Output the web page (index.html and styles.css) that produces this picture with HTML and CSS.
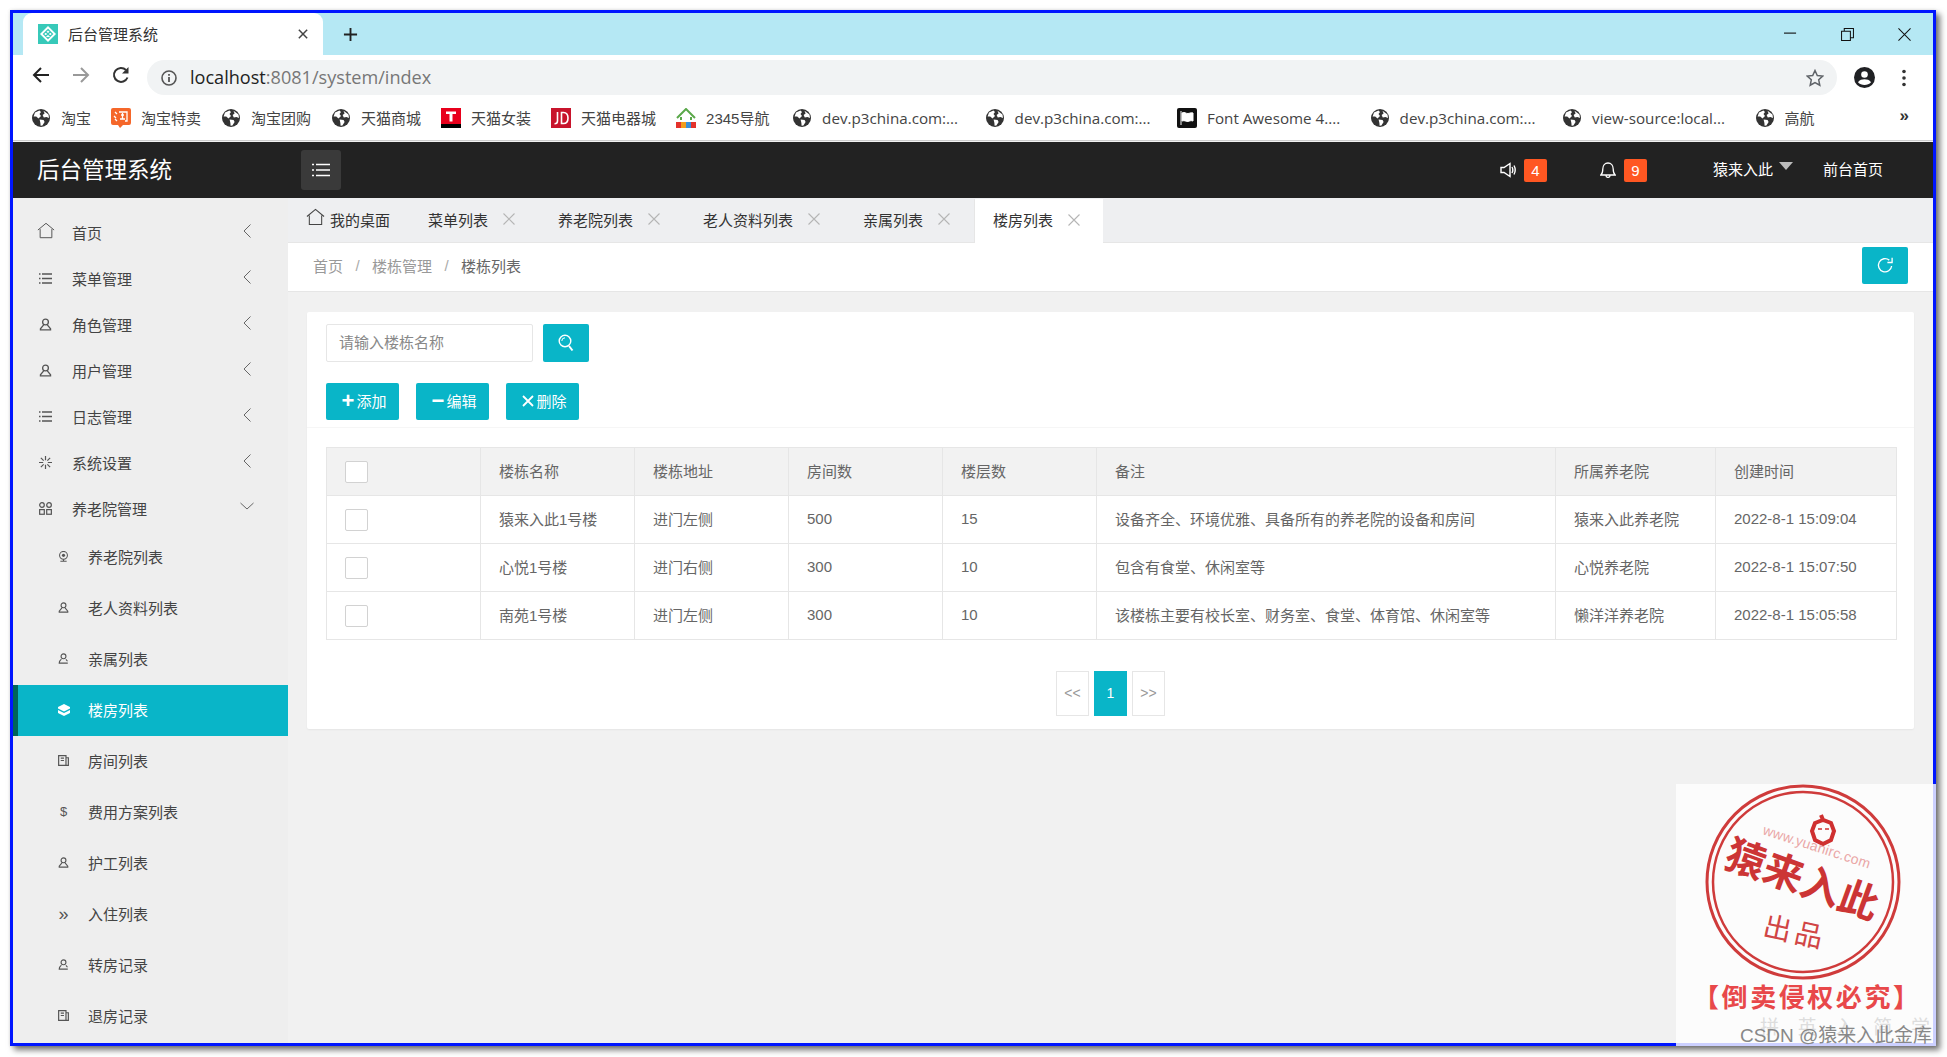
FILE: index.html
```html
<!DOCTYPE html>
<html lang="zh">
<head>
<meta charset="utf-8">
<title>后台管理系统</title>
<link rel="stylesheet" href="styles.css">
</head>
<body>
<svg class="defs" width="0" height="0" aria-hidden="true">
  <symbol id="i-globe" viewBox="0 0 18 18"><circle cx="9" cy="9" r="9" fill="#333"/><path d="M3 3.500 7.500 1.400 9 3 7.500 5 9 7 6.500 9.500 4.200 7.600 1.600 7.400ZM11.500 1.800 16.500 5.600 17 9 14.400 8 11.800 8.400 10.600 6 12.600 4.400ZM7.600 10.600 11.600 11 12.600 13 10.400 16.600 8.600 16.800 8.400 14Z" fill="#fff"/></symbol>
  <symbol id="i-menu" viewBox="0 0 18 14"><path d="M0 1.500h2M4 1.500h14M0 7h2M4 7h14M0 12.500h2M4 12.500h14" fill="none" stroke="currentColor" stroke-width="1.400"/></symbol>
  <symbol id="i-menu-s" viewBox="0 0 13 13"><path d="M0 2h1.500M3 2h10M0 6.500h1.500M3 6.500h10M0 11h1.500M3 11h10" fill="none" stroke="currentColor" stroke-width="1.400"/></symbol>
  <symbol id="i-user" viewBox="0 0 18 18"><circle cx="9" cy="5.500" r="4" fill="none" stroke="currentColor" stroke-width="1.800"/><path d="M6.500 9.500 2 15v1.500h14V15l-4.500-5.500" fill="none" stroke="currentColor" stroke-width="1.800"/></symbol>
  <symbol id="i-user2" viewBox="0 0 18 18"><circle cx="9" cy="5.500" r="4" fill="none" stroke="currentColor" stroke-width="1.800"/><path d="M5.500 10C3 12 2 14 2 16.500h14M13 10.500l2.500 3" fill="none" stroke="currentColor" stroke-width="1.800"/></symbol>
  <symbol id="i-home" viewBox="0 0 20 18"><path d="M1 8.500 10 1l9 7.500M3.500 7.500v9.500h13V7.500" fill="none" stroke="currentColor" stroke-width="1.100"/></symbol>
  <symbol id="i-spin" viewBox="0 0 14 14"><path d="M7 0v4.500M7 9.500V14M0 7h4.500M9.500 7H14M2 2l3 3M9 9l3 3M12 2 9 5M5 9l-3 3" fill="none" stroke="currentColor" stroke-width="1.300"/></symbol>
  <symbol id="i-grid" viewBox="0 0 14 14"><g fill="none" stroke="currentColor" stroke-width="1.300"><circle cx="3.200" cy="3.200" r="2.500"/><circle cx="10.800" cy="3.200" r="2.500"/><rect x=".7" y="8.200" width="5" height="5"/><rect x="8.300" y="8.200" width="5" height="5"/></g></symbol>
  <symbol id="i-cam" viewBox="0 0 12 14"><circle cx="6" cy="5.500" r="5" fill="none" stroke="currentColor" stroke-width="1.300"/><circle cx="6" cy="5.500" r="2" fill="currentColor"/><path d="M2 13h8M6 10.500V13" stroke="currentColor" stroke-width="1.500"/></symbol>
  <symbol id="i-box" viewBox="0 0 12 12"><path d="M.7.700h8V11.300h-8ZM8.700 3h2.600v8.300H8.700M3 3.500h3.500M3 6h3.500" fill="none" stroke="currentColor" stroke-width="1.300"/></symbol>
  <symbol id="i-layer" viewBox="0 0 12 12"><path d="M6 0 12 3v1.500L6 7.500 0 4.500V3ZM0 6l6 3 6-3v3l-6 3-6-3Z" fill="currentColor"/></symbol>
  <symbol id="i-x" viewBox="0 0 12 12"><path d="M.5.500l11 11M11.500.500l-11 11" fill="none" stroke="currentColor" stroke-width="1.100"/></symbol>
  <symbol id="i-search" viewBox="0 0 16 18"><circle cx="7" cy="7" r="5.800" fill="none" stroke="currentColor" stroke-width="1.400"/><path d="M3.800 7A3.200 3.200 0 0 1 7 3.800" fill="none" stroke="currentColor"/><path d="M11 12l3.500 4.500" stroke="currentColor" stroke-width="2"/></symbol>
</svg>

<div class="frame">
  <header class="tabstrip">
    <div class="ctab">
      <svg class="favicon" viewBox="0 0 20 20"><rect width="20" height="20" fill="#37c9b9"/><path d="M10 2l8 8-8 8-8-8Z" fill="#fff"/><path d="M10 5.500 14.500 10 10 14.500 5.500 10Z M7.500 7.500l5 5M12.500 7.500l-5 5" fill="none" stroke="#37c9b9" stroke-width="1.200"/></svg>
      <span class="ctab-title">后台管理系统</span>
      <svg class="ctab-x" viewBox="0 0 12 12"><path d="M1 1l10 10M11 1 1 11" fill="none" stroke="#444" stroke-width="1.800"/></svg>
    </div>
    <svg class="newtab" viewBox="0 0 16 16"><path d="M8 1v14M1 8h14" stroke="#222" stroke-width="2"/></svg>
    <div class="winbtns">
      <svg class="win" viewBox="0 0 14 14"><path d="M0 5.500h13" stroke="#111" stroke-width="1.200"/></svg>
      <svg class="win" viewBox="0 0 14 14"><path d="M.6 3.500h9.500V13.400H.6ZM3.500 3.500V.6h9.900v9.900h-3.300" fill="none" stroke="#111" stroke-width="1.100"/></svg>
      <svg class="win" viewBox="0 0 14 14"><path d="M.5.500l13 13M13.500.500l-13 13" fill="none" stroke="#111" stroke-width="1.100"/></svg>
    </div>
  </header>

  <div class="toolbar">
    <svg class="nav-ico" viewBox="0 0 18 18"><path d="M17 9H2M9 2 2 9l7 7" fill="none" stroke="#222" stroke-width="2"/></svg>
    <svg class="nav-ico" viewBox="0 0 18 18"><path d="M1 9h15M9 2l7 7-7 7" fill="none" stroke="#999" stroke-width="2"/></svg>
    <svg class="nav-ico" viewBox="0 0 18 18"><path d="M15.500 11.500A7 7 0 1 1 14 4" fill="none" stroke="#333" stroke-width="2"/><path d="M16.500 1v6.500H10Z" fill="#333"/></svg>
    <div class="omnibox">
      <svg class="info" viewBox="0 0 16 16"><circle cx="8" cy="8" r="7" fill="none" stroke="#555" stroke-width="1.600"/><path d="M8 7v5M8 4v1.800" stroke="#555" stroke-width="1.800"/></svg>
      <span class="url"><b class="host">localhost</b>:8081/system/index</span>
      <svg class="star" viewBox="0 0 18 18"><path d="M9 1.500l2.300 5 5.400.6-4 3.700 1.100 5.400L9 13.500l-4.800 2.700 1.100-5.400-4-3.700 5.400-.6Z" fill="none" stroke="#5f6368" stroke-width="1.500"/></svg>
    </div>
    <svg class="account" viewBox="0 0 21 21"><circle cx="10.500" cy="10.500" r="10.500" fill="#202124"/><circle cx="10.500" cy="7.500" r="3.300" fill="#fff"/><path d="M4 15.200c1.500-2.400 4-3 6.500-3s5 .6 6.500 3c-1.500 1.800-4 2.800-6.500 2.800S5.500 17 4 15.200Z" fill="#fff"/></svg>
    <svg class="dots" viewBox="0 0 4 18"><circle cx="2" cy="2.500" r="1.800" fill="#333"/><circle cx="2" cy="9" r="1.800" fill="#333"/><circle cx="2" cy="15.500" r="1.800" fill="#333"/></svg>
  </div>

  <nav class="bookmarks">
    <a class="bm"><svg class="bm-ico bm-g"><use href="#i-globe"/></svg><span>淘宝</span></a>
    <a class="bm"><svg class="bm-ico" viewBox="0 0 20 20"><path d="M2 0h16a2 2 0 0 1 2 2v13a2 2 0 0 1-2 2h-6l-3 3-2-3H2a2 2 0 0 1-2-2V2a2 2 0 0 1 2-2Z" fill="#f5672a"/><path d="M4 4l2 2M3 8l2 2M6 13l-2-2M8 4h8v9h-2M10 7h3M11.500 5v6M9 11h5" fill="none" stroke="#fff" stroke-width="1.300"/></svg><span>淘宝特卖</span></a>
    <a class="bm"><svg class="bm-ico bm-g"><use href="#i-globe"/></svg><span>淘宝团购</span></a>
    <a class="bm"><svg class="bm-ico bm-g"><use href="#i-globe"/></svg><span>天猫商城</span></a>
    <a class="bm"><svg class="bm-ico" viewBox="0 0 20 20"><rect width="20" height="20" fill="#e8001c"/><path d="M0 16h20v4H0Z" fill="#000"/><path d="M5 3.500h10v2.500h-3.500v7.500h-3V6H5Z" fill="#fff"/></svg><span>天猫女装</span></a>
    <a class="bm"><svg class="bm-ico" viewBox="0 0 20 20"><rect width="20" height="20" fill="#c8142c"/><path d="M6.500 4v9c0 2-1 2.800-3 2.800M10.500 4.500v11h2c3 0 4.500-2 4.500-5.500s-1.500-5.500-4.500-5.500Z" fill="none" stroke="#fff" stroke-width="1.600"/></svg><span>天猫电器城</span></a>
    <a class="bm"><svg class="bm-ico" viewBox="0 0 20 20"><path d="M1 10 10 1l9 9M5 9V12M15 9V12" fill="none" stroke="#5aa84a" stroke-width="2"/><rect x="0" y="14" width="5" height="6" fill="#e4322b"/><rect x="5" y="14" width="5" height="6" fill="#f29c1f"/><rect x="10" y="14" width="5" height="6" fill="#3b8fd9"/><rect x="15" y="14" width="5" height="6" fill="#e4322b"/></svg><span class="bm-num">2345导航</span></a>
    <a class="bm"><svg class="bm-ico bm-g"><use href="#i-globe"/></svg><span class="bm-long">dev.p3china.com:...</span></a>
    <a class="bm"><svg class="bm-ico bm-g"><use href="#i-globe"/></svg><span class="bm-long">dev.p3china.com:...</span></a>
    <a class="bm"><svg class="bm-ico" viewBox="0 0 20 20"><rect width="20" height="20" rx="2" fill="#111"/><path d="M4 3v14M5 5c3-1.500 4 .8 6 .5s3-1 5-.5v8c-2-.7-3 0-5 .4s-3-1.500-6-.4Z" fill="#fff" stroke="#fff"/></svg><span class="bm-long">Font Awesome 4....</span></a>
    <a class="bm"><svg class="bm-ico bm-g"><use href="#i-globe"/></svg><span class="bm-long">dev.p3china.com:...</span></a>
    <a class="bm"><svg class="bm-ico bm-g"><use href="#i-globe"/></svg><span class="bm-long">view-source:local...</span></a>
    <a class="bm"><svg class="bm-ico bm-g"><use href="#i-globe"/></svg><span>高航</span></a>
    <span class="bm-more">»</span>
  </nav>

  <div class="topbar">
    <div class="brand">后台管理系统</div>
    <button class="hamburger"><svg class="ham-ico"><use href="#i-menu"/></svg></button>
    <div class="topright">
      <span class="notice">
        <svg class="top-ico" viewBox="0 0 16 16"><path d="M1 5.500h3L10 1.500v13L4 10.500H1ZM12 5c1 1.800 1 4.200 0 6M14 3.500c1.500 2.800 1.500 6.200 0 9" fill="none" stroke="#fff" stroke-width="1.400"/></svg>
        <b class="badge">4</b>
      </span>
      <span class="notice">
        <svg class="top-ico" viewBox="0 0 16 16"><path d="M.8 13c1.500-1.200 2-2.500 2-6C2.800 3.500 5 1 8 1s5.200 2.500 5.200 6c0 3.500.5 4.800 2 6ZM6 13.500c0 2.500 4 2.500 4 0" fill="none" stroke="#fff" stroke-width="1.300"/></svg>
        <b class="badge">9</b>
      </span>
      <span class="user">猿来入此<i class="caret"></i></span>
      <span class="front">前台首页</span>
    </div>
  </div>

  <div class="workspace">
    <aside class="sidebar">
      <a class="side-item"><svg class="side-home"><use href="#i-home"/></svg><span>首页</span><svg class="chev" viewBox="0 0 8 14"><path d="M7.500.5 1 7l6.500 6.500" fill="none" stroke="currentColor"/></svg></a>
      <a class="side-item"><svg class="side-ico"><use href="#i-menu-s"/></svg><span>菜单管理</span><svg class="chev" viewBox="0 0 8 14"><path d="M7.500.5 1 7l6.500 6.500" fill="none" stroke="currentColor"/></svg></a>
      <a class="side-item"><svg class="side-ico"><use href="#i-user"/></svg><span>角色管理</span><svg class="chev" viewBox="0 0 8 14"><path d="M7.500.5 1 7l6.500 6.500" fill="none" stroke="currentColor"/></svg></a>
      <a class="side-item"><svg class="side-ico"><use href="#i-user"/></svg><span>用户管理</span><svg class="chev" viewBox="0 0 8 14"><path d="M7.500.5 1 7l6.500 6.500" fill="none" stroke="currentColor"/></svg></a>
      <a class="side-item"><svg class="side-ico"><use href="#i-menu-s"/></svg><span>日志管理</span><svg class="chev" viewBox="0 0 8 14"><path d="M7.500.5 1 7l6.500 6.500" fill="none" stroke="currentColor"/></svg></a>
      <a class="side-item"><svg class="side-ico"><use href="#i-spin"/></svg><span>系统设置</span><svg class="chev" viewBox="0 0 8 14"><path d="M7.500.5 1 7l6.500 6.500" fill="none" stroke="currentColor"/></svg></a>
      <a class="side-item"><svg class="side-ico"><use href="#i-grid"/></svg><span>养老院管理</span><svg class="chev chev-open" viewBox="0 0 14 8"><path d="M.5 1 7 7l6.500-6" fill="none" stroke="currentColor"/></svg></a>
      <a class="side-sub"><svg class="sub-ico"><use href="#i-cam"/></svg><span>养老院列表</span></a>
      <a class="side-sub"><svg class="sub-ico"><use href="#i-user"/></svg><span>老人资料列表</span></a>
      <a class="side-sub"><svg class="sub-ico"><use href="#i-user2"/></svg><span>亲属列表</span></a>
      <a class="side-sub is-active"><svg class="sub-ico"><use href="#i-layer"/></svg><span>楼房列表</span></a>
      <a class="side-sub"><svg class="sub-ico"><use href="#i-box"/></svg><span>房间列表</span></a>
      <a class="side-sub"><span class="sub-glyph">$</span><span>费用方案列表</span></a>
      <a class="side-sub"><svg class="sub-ico"><use href="#i-user"/></svg><span>护工列表</span></a>
      <a class="side-sub"><span class="sub-glyph sub-glyph-lg">»</span><span>入住列表</span></a>
      <a class="side-sub"><svg class="sub-ico"><use href="#i-user2"/></svg><span>转房记录</span></a>
      <a class="side-sub"><svg class="sub-ico"><use href="#i-box"/></svg><span>退房记录</span></a>
    </aside>

    <main class="main">
      <div class="pagetabs">
        <span class="ptab ptab-home"><svg class="ptab-homeico"><use href="#i-home"/></svg>我的桌面</span>
        <span class="ptab">菜单列表<svg class="ptab-x"><use href="#i-x"/></svg></span>
        <span class="ptab">养老院列表<svg class="ptab-x"><use href="#i-x"/></svg></span>
        <span class="ptab">老人资料列表<svg class="ptab-x"><use href="#i-x"/></svg></span>
        <span class="ptab">亲属列表<svg class="ptab-x"><use href="#i-x"/></svg></span>
        <span class="ptab ptab-active">楼房列表<svg class="ptab-x"><use href="#i-x"/></svg></span>
      </div>
      <div class="crumbbar">
        <span class="crumb">首页</span><i class="sep">/</i><span class="crumb">楼栋管理</span><i class="sep">/</i><span class="crumb crumb-cur">楼栋列表</span>
        <button class="refresh"><svg class="refresh-ico" viewBox="0 0 18 18"><path d="M15.500 9.500A7 7 0 1 1 13 3.300" fill="none" stroke="#fff" stroke-width="1.400"/><path d="M16 .8v5h-5" fill="none" stroke="#fff" stroke-width="1.400"/></svg></button>
      </div>
      <section class="card">
        <div class="searchrow">
          <div class="searchinput">请输入楼栋名称</div>
          <button class="btn btn-search"><svg class="search-ico"><use href="#i-search"/></svg></button>
        </div>
        <div class="actions">
          <button class="btn btn-act"><span class="act-sign">+</span>添加</button>
          <button class="btn btn-act"><span class="act-sign">−</span>编辑</button>
          <button class="btn btn-act"><svg class="act-x" viewBox="0 0 12 12"><path d="M1 1l10 10M11 1 1 11" fill="none" stroke="#fff" stroke-width="1.800"/></svg>删除</button>
        </div>
        <div class="tablewrap">
          <table class="grid">
            <colgroup><col class="c1"><col class="c1"><col class="c1"><col class="c1"><col class="c5"><col class="c6"><col class="c7"><col class="c8"></colgroup>
            <thead>
              <tr><th><i class="check"></i></th><th>楼栋名称</th><th>楼栋地址</th><th>房间数</th><th>楼层数</th><th>备注</th><th>所属养老院</th><th>创建时间</th></tr>
            </thead>
            <tbody>
              <tr><td><i class="check"></i></td><td>猿来入此1号楼</td><td>进门左侧</td><td>500</td><td>15</td><td>设备齐全、环境优雅、具备所有的养老院的设备和房间</td><td>猿来入此养老院</td><td>2022-8-1 15:09:04</td></tr>
              <tr><td><i class="check"></i></td><td>心悦1号楼</td><td>进门右侧</td><td>300</td><td>10</td><td>包含有食堂、休闲室等</td><td>心悦养老院</td><td>2022-8-1 15:07:50</td></tr>
              <tr><td><i class="check"></i></td><td>南苑1号楼</td><td>进门左侧</td><td>300</td><td>10</td><td>该楼栋主要有校长室、财务室、食堂、体育馆、休闲室等</td><td>懒洋洋养老院</td><td>2022-8-1 15:05:58</td></tr>
            </tbody>
          </table>
        </div>
        <div class="pager">
          <span class="pg">&lt;&lt;</span><span class="pg pg-on">1</span><span class="pg">&gt;&gt;</span>
        </div>
      </section>
    </main>
  </div>

  <aside class="stamp">
    <svg class="stamp-art" viewBox="0 0 260 262">
      <circle class="ring" cx="127" cy="98" r="96"/>
      <circle class="ring ring-in" cx="127" cy="98" r="90"/>
      <path class="apple" d="M139 39l8-3 8 3 3 8-3 9-8 4-8-4-3-9ZM147 36l-2-5"/>
      <path class="apple-eye" d="M142 45h4M149 45h4"/>
      <text class="st-url" transform="translate(86 50) rotate(18)" textLength="112">www.yuanirc.com</text>
      <text class="st-big" transform="translate(121.500 109) rotate(20)" text-anchor="middle">猿来入此</text>
      <text class="st-mid" transform="translate(117 158) rotate(12)" text-anchor="middle">出品</text>
      <text class="st-warn" x="17" y="223" textLength="226">【倒卖侵权必究】</text>
      <text class="st-ghost" x="84" y="250" textLength="170">拼 英 入 简 学</text>
      <text class="st-csdn" x="64" y="258" textLength="192">CSDN @猿来入此金库</text>
    </svg>
  </aside>
</div>
</body>
</html>
```
FILE: styles.css
```css
* { box-sizing: border-box; }
html, body { margin: 0; height: 100%; overflow: hidden; background: #fff; }
body {
  padding: 10px 0 0 10px;
  font-family: "Liberation Sans", "Noto Sans CJK SC", sans-serif;
  font-size: 15px;
  color: #555;
}
.defs { position: absolute; }
.frame {
  position: relative;
  display: flex;
  flex-direction: column;
  width: 1926px;
  height: 1036px;
  border: 3px solid #0016ff;
  box-shadow: 4px 4px 6px rgba(0, 0, 0, .55), 0 0 3px rgba(0, 0, 0, .12);
  background: #f1f1f1;
}

/* browser chrome */
.tabstrip { display: flex; align-items: center; height: 42px; flex: none; padding-left: 10px; background: #b5e8f4; }
.ctab { display: flex; align-items: center; width: 300px; height: 42px; padding: 0 15px; background: #fff; border-radius: 9px 9px 0 0; }
.favicon { width: 20px; height: 20px; flex: none; }
.ctab-title { margin-left: 10px; padding-bottom: 2px; color: #333; }
.ctab-x { width: 10px; height: 10px; margin-left: auto; }
.newtab { width: 15px; height: 15px; margin-left: 20px; }
.winbtns { display: flex; gap: 44px; margin-left: auto; padding-right: 22px; }
.win { width: 13px; height: 13px; }

.toolbar { display: flex; align-items: center; height: 40px; flex: none; padding-left: 19px; background: #fff; }
.nav-ico { width: 18px; height: 18px; margin-right: 22px; }
.nav-ico:nth-child(3) { margin-right: 17px; }
.omnibox { display: flex; align-items: center; width: 1690px; height: 35px; margin-top: 5px; padding: 0 13px 0 14px; border-radius: 18px; background: #f1f3f4; }
.info { width: 16px; height: 16px; }
.url { margin-left: 13px; padding-bottom: 2px; font-family: "Open Sans", sans-serif; font-size: 18.100px; color: #777; }
.host { font-weight: 400; color: #222; }
.star { width: 18px; height: 18px; margin-left: auto; }
.toolbar > .account { width: 21px; height: 21px; margin: 5px 0 0 17px; flex: none; }
.dots { width: 4px; height: 18px; margin: 5px 0 0 27px; flex: none; }

.bookmarks { display: flex; align-items: center; height: 46px; flex: none; padding: 0 0 0 18px; gap: 20px; background: #fff; border-bottom: 1px solid #ccc; }
.bm { display: flex; align-items: center; gap: 10px; color: #444; white-space: nowrap; }
.bm-ico { width: 20px; height: 20px; flex: none; }
.bm-g { width: 18px; height: 18px; margin: 0 1px; }
.bm-num { width: 66px; }
.bm-long { width: 142.500px; font-family: "Open Sans", sans-serif; font-size: 15.200px; white-space: nowrap; }
.bm-more { margin-left: auto; margin-right: 24px; margin-top: -4px; font-size: 17px; font-weight: 700; color: #333; }

.topbar { display: flex; align-items: center; height: 56px; flex: none; margin-top: 1px; padding-left: 24px; background: #222; color: #fff; }
.brand { width: 264px; padding-bottom: 4px; font-size: 22.500px; }
.hamburger { display: flex; align-items: center; justify-content: center; width: 40px; height: 40px; padding: 0; border: 0; border-radius: 3px; background: #3a3a3a; color: #fff; }
.ham-ico { width: 18px; height: 14px; }
.topright { display: flex; align-items: center; margin-left: auto; padding-right: 50px; }
.notice { display: flex; align-items: center; gap: 8px; margin-right: 54px; }
.notice:first-child { margin-right: 53px; }
.notice + .user { margin-left: 12px; }
.top-ico { width: 16px; height: 16px; }
.badge { width: 23px; height: 23px; border-radius: 2px; background: #ff5722; font-weight: 400; font-size: 15px; line-height: 23px; text-align: center; }
.user { display: flex; align-items: center; margin-right: 30px; padding-bottom: 3px; }
.front { padding-bottom: 3px; }
.caret { width: 0; height: 0; margin: -5px 0 0 6px; border: 7.500px solid transparent; border-top: 8px solid #bbb; border-bottom: 0; }

/* workspace */
.workspace { display: flex; flex: 1; min-height: 0; }
.sidebar { width: 275px; flex: none; padding-top: 12px; background: #eee; color: #444; }
.side-item { display: flex; align-items: center; height: 46px; padding: 0 37px 2px 24px; }
.side-home { width: 18px; height: 17px; margin-right: 17px; margin-top: -3px; flex: none; color: #555; }
.side-ico { width: 13px; height: 13px; margin: 0 20px 0 2px; flex: none; color: #555; }
.chev { width: 8px; height: 14px; margin: -3px 0 0 auto; color: #666; }
.chev-open { width: 14px; height: 8px; margin-right: -3px; margin-top: -4px; }
.side-sub { display: flex; align-items: center; height: 51px; padding: 0 0 2px 45px; }
.sub-ico { width: 11px; height: 11px; margin-right: 19px; flex: none; color: #555; }
.sub-glyph { width: 11px; margin-right: 19px; font-size: 13px; text-align: center; color: #555; }
.sub-glyph-lg { font-size: 18px; line-height: 1; }
.is-active { background: #09b5c8; box-shadow: inset 5px 0 0 #00655a; color: #fff; }
.is-active .sub-ico { width: 12px; height: 12px; margin-right: 18px; color: #fff; }

.main { display: flex; flex-direction: column; flex: 1; min-width: 0; }
.pagetabs { display: flex; align-items: flex-end; height: 45px; flex: none; padding-left: 18px; background: #eeeff1; border-bottom: 1px solid #e6e6e6; color: #333; }
.ptab { display: flex; align-items: center; height: 43px; padding-bottom: 3px; margin-right: 43px; }
.ptab-home { margin-right: 38px; }
.ptab-homeico { width: 19px; height: 18px; margin-right: 5px; margin-top: -4px; color: #444; }
.ptab-x { width: 12px; height: 12px; margin-left: 15px; color: #b5b5b5; }
.ptab-active { margin: 0 0 -1px -19px; padding: 0 23px 3px 18px; background: #fff; height: 44px; border-left: 1px solid #e6e6e6; }

.crumbbar { display: flex; align-items: center; height: 49px; flex: none; padding: 0 25px 4px 25px; background: #fff; border-bottom: 1px solid #e6e6e6; color: #999; }
.crumb-cur { color: #666; }
.sep { width: 29px; font-style: normal; text-align: center; color: #aaa; }
.refresh { display: flex; align-items: center; justify-content: center; width: 46px; height: 37px; margin-left: auto; padding: 0; border: 0; border-radius: 2px; background: #09b5c8; }
.refresh-ico { width: 17px; height: 17px; }

.card { margin: 20px 19px 0; padding: 12px 19px 13px 19px; border-radius: 2px; background: #fff; box-shadow: 0 1px 2px rgba(0, 0, 0, .05); }
.searchrow { display: flex; gap: 10px; height: 38px; }
.searchinput { width: 207px; height: 38px; padding: 0 0 0 12px; border: 1px solid #e6e6e6; border-radius: 2px; line-height: 35px; color: #888; }
.btn { display: flex; align-items: center; justify-content: center; padding: 0; border: 0; border-radius: 2px; background: #09b5c8; color: #fff; font: inherit; }
.btn-search { width: 46px; height: 38px; }
.search-ico { width: 16px; height: 18px; }
.actions { display: flex; gap: 17.500px; margin: 21px -19px 0; padding: 0 19px 7px; border-bottom: 1px solid #f6f6f6; }
.btn-act { justify-content: flex-start; width: 72.500px; height: 37px; padding: 0 0 2px 15.500px; }
.act-sign { width: 12px; margin-right: 3px; font-size: 22px; line-height: 1; font-weight: 700; text-align: center; }
.act-x { width: 12px; height: 12px; margin-right: 3px; }

.tablewrap { margin-top: 19px; }
.grid { width: 1570px; table-layout: fixed; border-collapse: collapse; }
.c1 { width: 154px; }
.c5 { width: 154px; }
.c6 { width: 459px; }
.c7 { width: 160px; }
.c8 { width: 181px; }
.grid th, .grid td { height: 48px; padding: 0 18px 2px; border: 1px solid #e6e6e6; font-weight: 400; text-align: left; color: #666; white-space: nowrap; }
.grid th { background: #f2f2f2; }
.check { display: block; width: 23px; height: 22px; margin-top: 2px; border: 1px solid #d2d2d2; border-radius: 2px; background: #fff; }

.pager { display: flex; justify-content: center; gap: 5px; margin: 31px 0 0; }
.pg { width: 33px; height: 45px; border: 1px solid #e6e6e6; line-height: 43px; text-align: center; color: #999; font-size: 14px; }
.pg-on { border-color: #09b5c8; background: #09b5c8; color: #fff; }

/* stamp overlay */
.stamp { position: absolute; right: -3px; bottom: -3px; width: 260px; height: 262px; background: rgba(255, 255, 255, .8); }
.stamp-art { display: block; width: 260px; height: 262px; overflow: visible; }
.ring { fill: none; stroke: #cf3b3b; stroke-width: 3; }
.ring-in { stroke-width: 2.500; }
.apple { fill: none; stroke: #cf3030; stroke-width: 4; }
.apple-eye { stroke: #cf3030; stroke-width: 1.500; }
.st-url { font-family: "Liberation Sans", sans-serif; font-size: 14px; fill: #eaa6a6; }
.st-big { font-family: "Noto Sans CJK SC", sans-serif; font-size: 40px; font-weight: 700; fill: #cc3535; }
.st-mid { font-family: "Noto Sans CJK SC", sans-serif; font-size: 28px; letter-spacing: 4px; font-weight: 400; fill: #d14545; }
.st-warn { font-family: "Noto Sans CJK SC", sans-serif; font-size: 26px; font-weight: 700; fill: #e8484a; }
.st-ghost { font-family: "Noto Sans CJK SC", sans-serif; font-size: 19px; fill: #ddd; }
.st-csdn { font-family: "Liberation Sans", "Noto Sans CJK SC", sans-serif; font-size: 19px; fill: #888; }
```
